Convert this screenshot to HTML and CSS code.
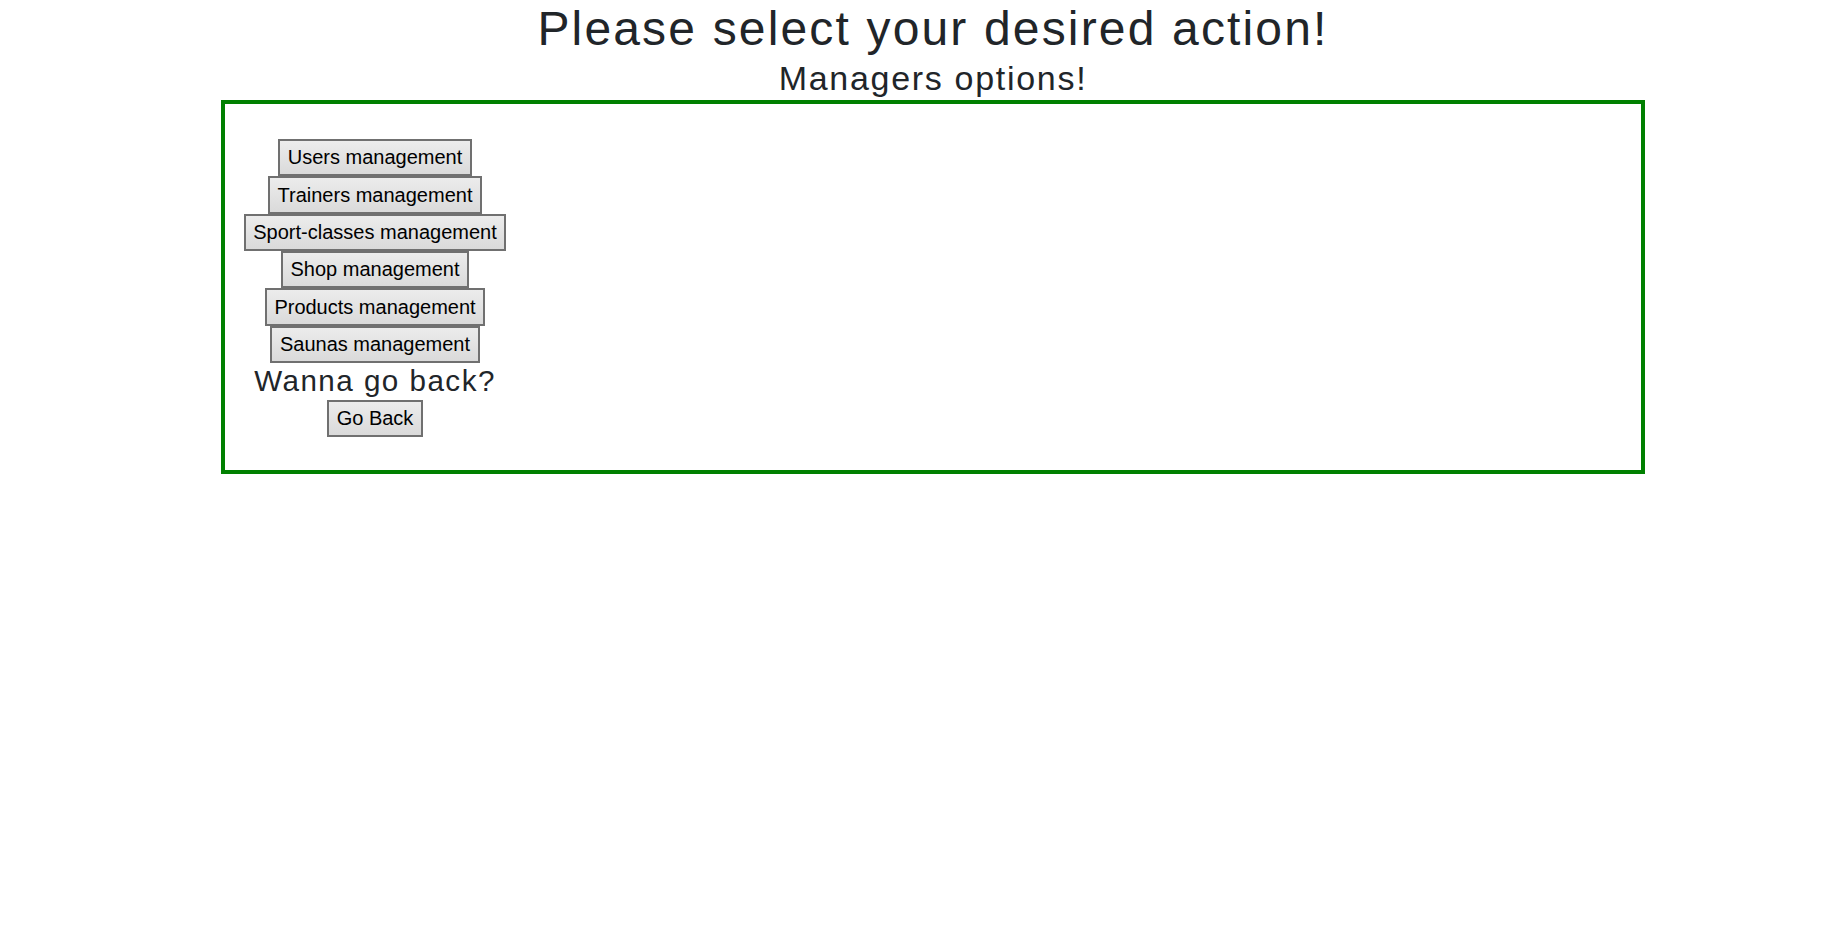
FILE: index.html
```html
<!DOCTYPE html>
<html lang="en">
<head>
<meta charset="utf-8">
<title>Managers options</title>
<link rel="stylesheet" href="styles.css">
</head>
<body>
<div class="page">
  <h1 class="title">Please select your desired action!</h1>
  <h3 class="subtitle">Managers options!</h3>
  <div class="panel">
    <div class="menu">
      <button class="btn" type="button">Users management</button>
      <button class="btn" type="button">Trainers management</button>
      <button class="btn" type="button">Sport-classes management</button>
      <button class="btn" type="button">Shop management</button>
      <button class="btn" type="button">Products management</button>
      <button class="btn" type="button">Saunas management</button>
      <h4 class="back-title">Wanna go back?</h4>
      <button class="btn" type="button">Go Back</button>
    </div>
  </div>
</div>
</body>
</html>
```

FILE: styles.css
```css
html, body {
  margin: 0;
  padding: 0;
  background: #ffffff;
}

body {
  font-family: "Liberation Sans", Arial, sans-serif;
  color: #212529;
}

.page {
  width: 1424px;
  margin-left: 221px;
  display: flex;
  flex-direction: column;
}

.title {
  margin: 0;
  font-size: 48px;
  font-weight: 400;
  line-height: 1.2;
  letter-spacing: 0.045em;
  text-align: center;
}

.subtitle {
  margin: 0;
  font-size: 34px;
  font-weight: 400;
  line-height: 1.2;
  letter-spacing: 0.05em;
  text-align: center;
}

.panel {
  margin-top: 1.6px;
  border: 4px solid #008000;
  padding: 35px 0 33px 0;
  display: flex;
}

.menu {
  width: 300px;
  display: flex;
  flex-direction: column;
  align-items: center;
}

.btn {
  font-family: "Liberation Sans", Arial, sans-serif;
  font-size: 20px;
  line-height: 23px;
  color: #000000;
  padding: 5.2px 7.7px;
  border: 2px solid #707070;
  border-radius: 0;
  background: linear-gradient(#ececec, #dadada);
  margin: 0;
}

.back-title {
  margin: 0 0 1px 0;
  font-size: 29.6px;
  font-weight: 400;
  line-height: 1.2;
  letter-spacing: 0.05em;
  text-align: center;
}
```
